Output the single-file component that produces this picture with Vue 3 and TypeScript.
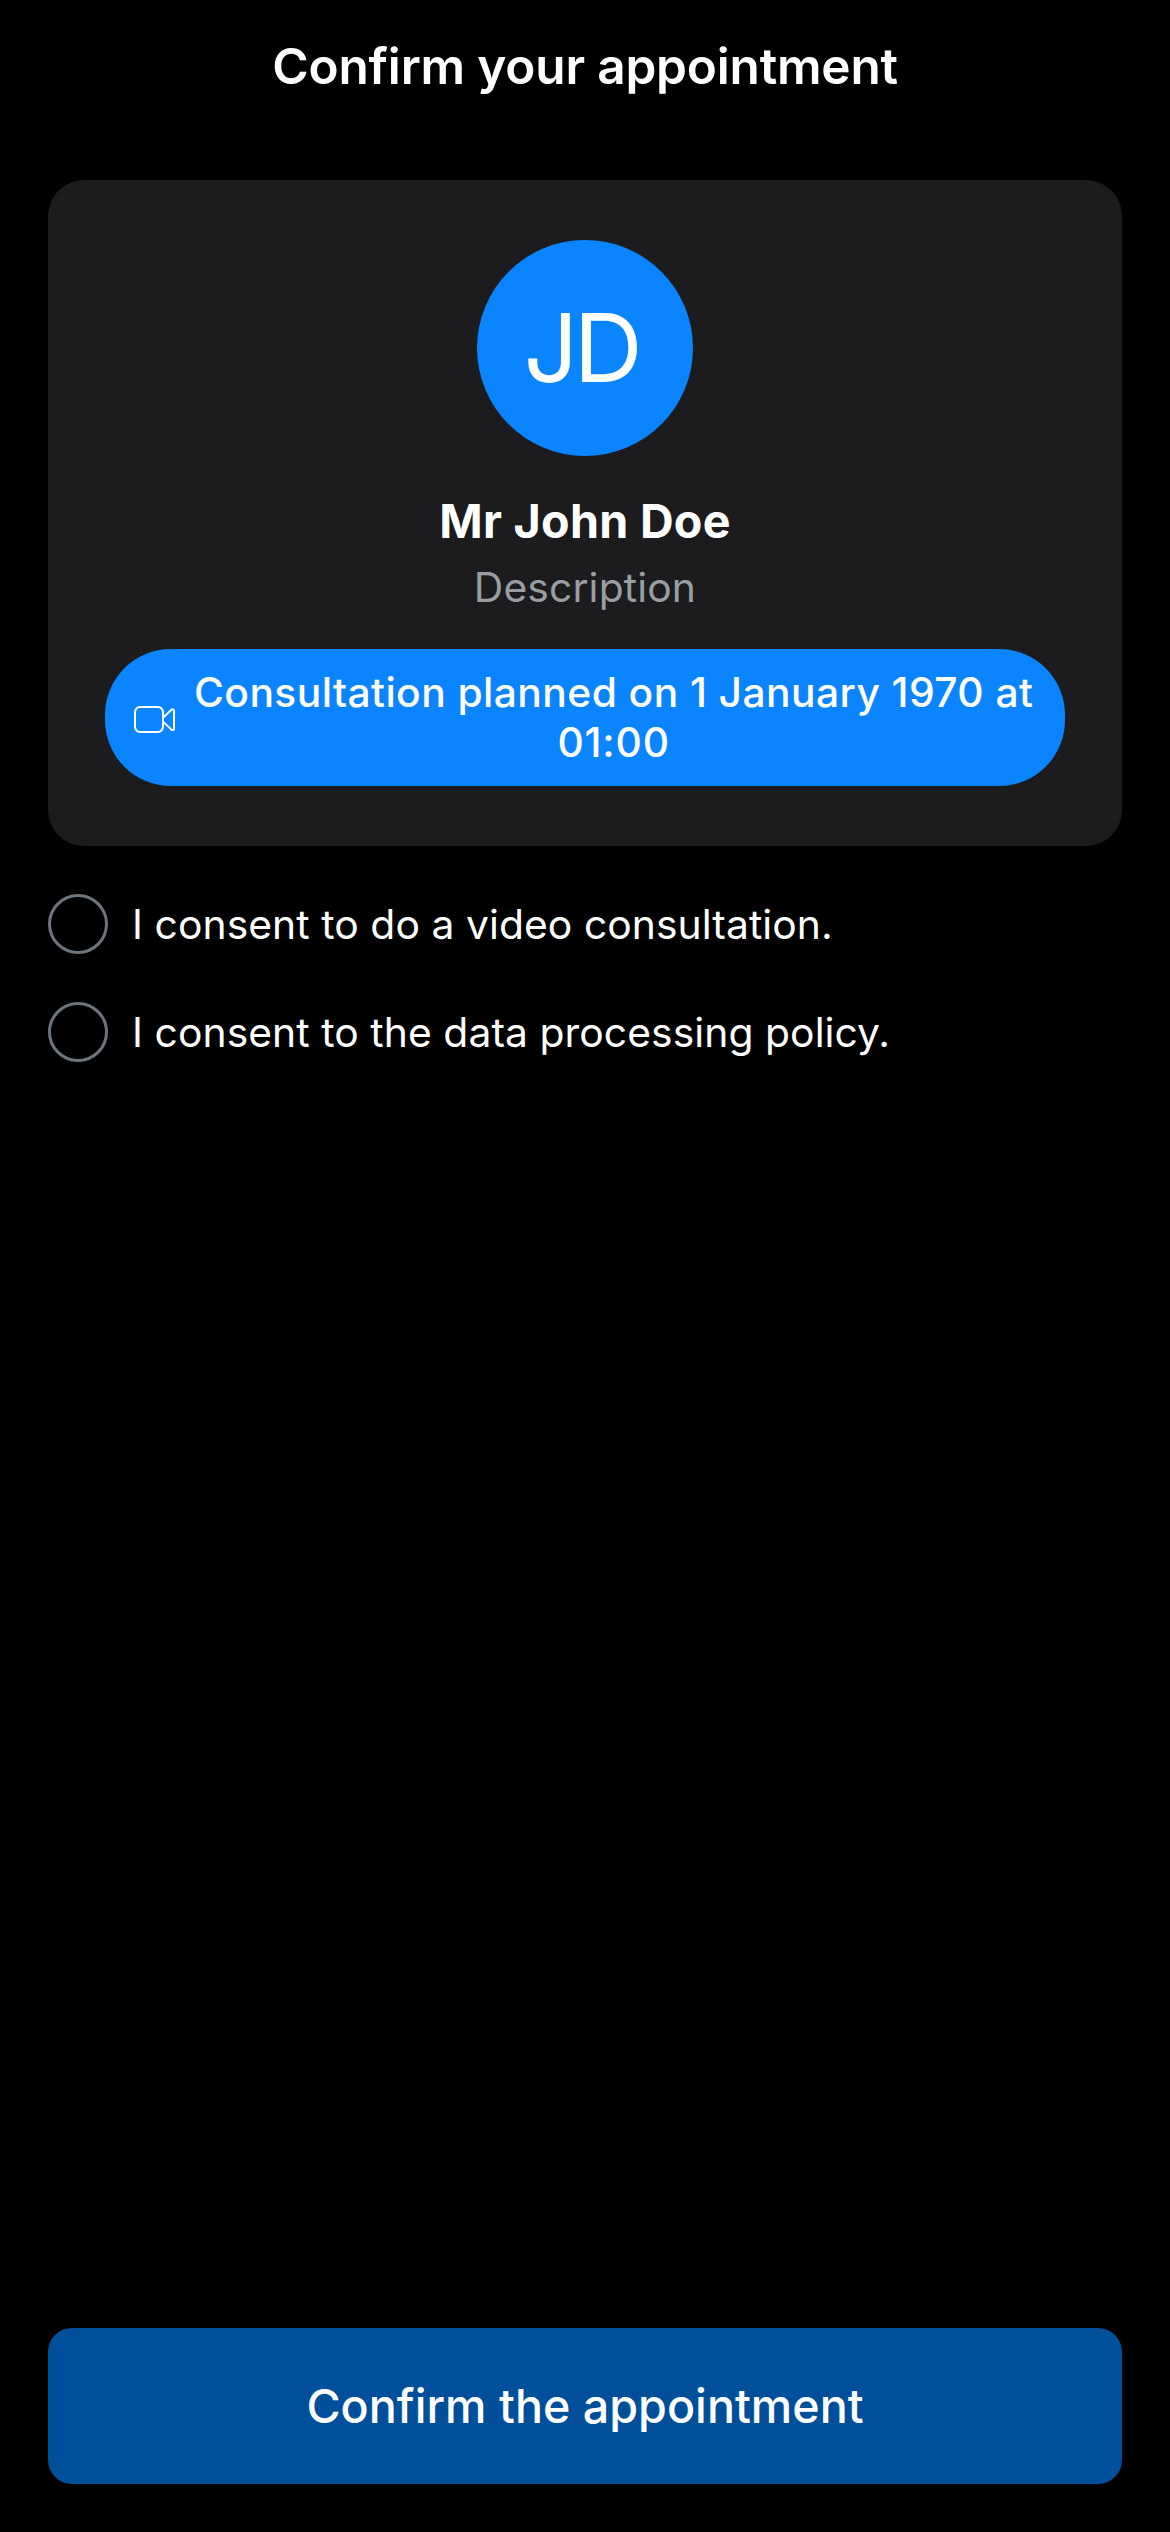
<script setup lang="ts">
import { reactive } from 'vue'

interface Consent {
  id: string
  label: string
  checked: boolean
}

const person = { initials: 'JD', name: 'Mr John Doe', description: 'Description' }

const consents = reactive<Consent[]>([
  { id: 'video', label: 'I consent to do a video consultation.', checked: false },
  { id: 'data', label: 'I consent to the data processing policy.', checked: false },
])
</script>

<template>
  <main class="screen">
    <h1 class="title">Confirm your appointment</h1>

    <section class="card">
      <div class="avatar">{{ person.initials }}</div>
      <h2 class="name">{{ person.name }}</h2>
      <p class="description">{{ person.description }}</p>
      <div class="pill">
        <svg class="camera" viewBox="0 0 42 28" fill="none" stroke="currentColor" stroke-width="2" stroke-linejoin="round" stroke-linecap="round" aria-hidden="true">
          <rect x="1" y="1" width="28" height="25" rx="5.2" />
          <path d="M29 11.8 37.2 4C38.7 2.7 40 3.3 40 5v17.4c0 1.7-1.3 2.3-2.8 1L29 15.6" />
        </svg>
        <p class="schedule">
          <span class="line">Consultation planned on 1 January 1970 at</span>
          <span class="line time">01:00</span>
        </p>
      </div>
    </section>

    <ul class="consents">
      <li v-for="item in consents" :key="item.id" class="consent" @click="item.checked = !item.checked">
        <span class="check" :class="{ checked: item.checked }" role="checkbox" :aria-checked="item.checked"></span>
        <span>{{ item.label }}</span>
      </li>
    </ul>

    <button class="confirm" type="button">Confirm the appointment</button>
  </main>
</template>

<style>
body {
  margin: 0;
  background: #000;
}
</style>

<style scoped>
.screen {
  box-sizing: border-box;
  display: flex;
  flex-direction: column;
  height: 2532px;
  padding: 0 48px 48px;
  background: #000;
  color: #fff;
  font-family: Inter, "Liberation Sans", sans-serif;
}

.title {
  margin: 0 0 48px;
  font-size: 49.5px;
  font-weight: 600;
  line-height: 132px;
  letter-spacing: -0.18px;
  text-align: center;
}

.card {
  box-sizing: border-box;
  display: flex;
  flex-direction: column;
  align-items: center;
  height: 666px;
  padding-top: 60px;
  border-radius: 36px;
  background: #1c1c1e;
}

.avatar {
  box-sizing: border-box;
  display: flex;
  align-items: center;
  justify-content: center;
  width: 216px;
  height: 216px;
  padding: 0 8px 1px 0;
  border-radius: 50%;
  background: #0a84ff;
  font-size: 95.4px;
  letter-spacing: -4.4px;
}

.name {
  margin: 35px 0 0;
  font-size: 46.6px;
  font-weight: 700;
  line-height: 60px;
  letter-spacing: 0.3px;
}

.description {
  margin: 11px 0 0;
  color: #999ea2;
  font-size: 40.8px;
  line-height: 50px;
  letter-spacing: 0.14px;
}

.pill {
  box-sizing: border-box;
  display: flex;
  align-items: center;
  width: 960px;
  height: 137px;
  margin-top: 37px;
  padding: 18px 26px 19px 29px;
  border-radius: 66px;
  background: #0a84ff;
}

.camera {
  flex: none;
  width: 42px;
  height: 28px;
  margin: 6px 18px 0 0;
}

.schedule {
  margin: 0;
  font-size: 40.8px;
  font-weight: 500;
  line-height: 50px;
  letter-spacing: 0.42px;
  text-align: center;
}

.line {
  display: block;
  white-space: nowrap;
}

.time {
  letter-spacing: 0.8px;
}

.consents {
  display: flex;
  flex-direction: column;
  gap: 48px;
  margin: 48px 0 0;
  padding: 0;
  list-style: none;
}

.consent {
  display: flex;
  align-items: center;
  gap: 24px;
  height: 60px;
  font-size: 40.8px;
  letter-spacing: 0.07px;
}

.check {
  box-sizing: border-box;
  width: 60px;
  height: 60px;
  border: 3px solid #6c757d;
  border-radius: 50%;
}

.check.checked {
  background: #0a84ff;
}

.confirm {
  height: 156px;
  margin-top: auto;
  padding: 0;
  border: 0;
  border-radius: 24px;
  background: #004f9a;
  color: #fff;
  font-family: inherit;
  font-size: 46.6px;
  font-weight: 500;
  letter-spacing: 0.03px;
}
</style>
